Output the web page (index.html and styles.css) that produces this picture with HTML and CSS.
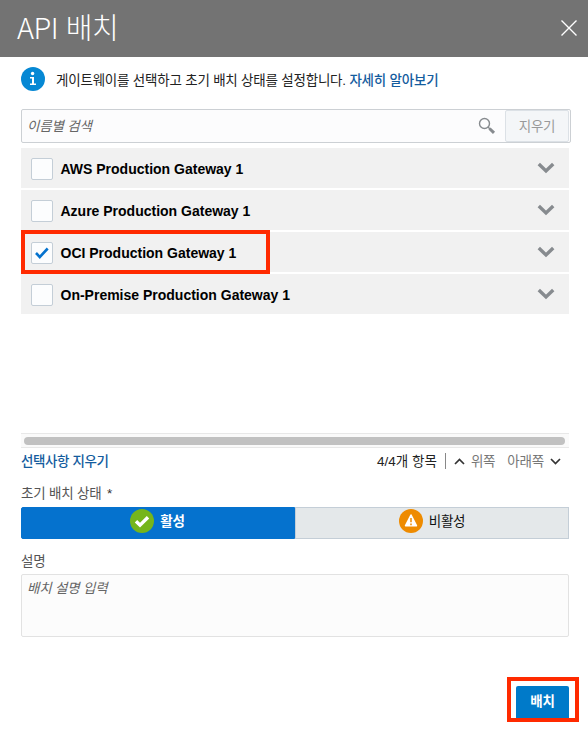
FILE: index.html
```html
<!DOCTYPE html>
<html lang="ko">
<head>
<meta charset="utf-8">
<title>API 배치</title>
<link rel="stylesheet" href="styles.css">
</head>
<body>
<header class="header">
  <h1 class="title">API <span class="title-ko">배치</span></h1>
  <svg class="close" width="18" height="18" viewBox="0 0 18 18"><path d="M1.5 1.5 16.5 16.5M16.5 1.5 1.5 16.5"/></svg>
</header>
<main class="content">
  <div class="info">
    <svg width="24" height="24" viewBox="0 0 24 24"><circle cx="12" cy="12" r="12" fill="#0688d4"/><circle cx="11.6" cy="6.5" r="1.7" fill="#fff"/><path d="M9 10h4v6.5h2V18H9v-1.5h2v-5H9z" fill="#fff"/></svg>
    <p class="info-text">게이트웨이를 선택하고 초기 배치 상태를 설정합니다. <a class="link">자세히 알아보기</a></p>
  </div>
  <div class="search">
    <span class="placeholder search-text">이름별 검색</span>
    <svg class="magnifier" width="18" height="18" viewBox="0 0 18 18"><circle cx="6.5" cy="6.5" r="5" fill="none" stroke="#878b8f" stroke-width="1.4"/><path d="m10 10 2 2" stroke="#878b8f" stroke-width="1.5"/><path d="m11.5 11.5 4.5 4.3" stroke="#878b8f" stroke-width="3"/></svg>
    <button class="clear">지우기</button>
  </div>
  <ul class="gateways">
    <li class="gateway"><span class="checkbox"></span><span class="name">AWS Production Gateway 1</span><svg class="chevron" width="18" height="12" viewBox="0 0 18 12"><path d="m1.8 2 7.2 7 7.2-7"/></svg></li>
    <li class="gateway"><span class="checkbox"></span><span class="name">Azure Production Gateway 1</span><svg class="chevron" width="18" height="12" viewBox="0 0 18 12"><path d="m1.8 2 7.2 7 7.2-7"/></svg></li>
    <li class="gateway selected"><span class="checkbox"><svg width="14" height="12" viewBox="0 0 14 12"><path d="m1 6 3.8 4L12.7 1.5" fill="none" stroke="#0572ce" stroke-width="2.6"/></svg></span><span class="name">OCI Production Gateway 1</span><svg class="chevron" width="18" height="12" viewBox="0 0 18 12"><path d="m1.8 2 7.2 7 7.2-7"/></svg></li>
    <li class="gateway"><span class="checkbox"></span><span class="name">On-Premise Production Gateway 1</span><svg class="chevron" width="18" height="12" viewBox="0 0 18 12"><path d="m1.8 2 7.2 7 7.2-7"/></svg></li>
  </ul>
  <div class="scrollbar"><div class="thumb"></div></div>
  <div class="list-footer">
    <a class="link clear-selection">선택사항 지우기</a>
    <span class="count">4/4개 항목</span>
    <span class="divider"></span>
    <svg class="pager" width="11" height="7" viewBox="0 0 11 7"><path d="m1 6 4.5-4.5L10 6"/></svg>
    <span class="page up">위쪽</span>
    <span class="page down">아래쪽</span>
    <svg class="pager" width="11" height="7" viewBox="0 0 11 7"><path d="m1 1 4.5 4.5L10 1"/></svg>
  </div>
  <div class="label state-label">초기 배치 상태 <span class="required">*</span></div>
  <div class="toggle">
    <div class="option active"><svg width="24" height="24" viewBox="0 0 24 24"><circle cx="12" cy="12" r="12" fill="#75b51b"/><path d="m6 12.2 4 4 8-8" fill="none" stroke="#fff" stroke-width="3.4"/></svg><span>활성</span></div>
    <div class="option"><svg width="24" height="24" viewBox="0 0 24 24"><circle cx="12" cy="12" r="12" fill="#ee8b00"/><path d="M12 6 17.4 16.7H6.6z" fill="#fff" stroke="#fff" stroke-width="1.6" stroke-linejoin="round"/><path d="M12 9v4.2M12 14.5v1.7" stroke="#ee8b00" stroke-width="1.5"/></svg><span>비활성</span></div>
  </div>
  <div class="label description-label">설명</div>
  <div class="textarea"><span class="placeholder">배치 설명 입력</span></div>
  <div class="actions"><div class="highlight"><button class="deploy">배치</button></div></div>
</main>
</body>
</html>
```

FILE: styles.css
```css
*, *::after { box-sizing: border-box; }
body {
  margin: 0;
  background: #fff;
  color: #222;
  font: 13.5px/20px "Liberation Sans", "Noto Sans CJK KR", sans-serif;
  letter-spacing: -.2px;
}
button { font: inherit; letter-spacing: inherit; padding: 0; }
svg { flex: none; display: block; }
.header {
  height: 57px;
  background: #737373;
  color: #fff;
  display: flex;
  align-items: flex-start;
  justify-content: space-between;
  padding: 0 10px 0 17px;
}
.title {
  margin: 6px 0 0;
  font: 300 29px/40px "Noto Sans CJK KR", sans-serif;
  letter-spacing: -.5px;
  white-space: nowrap;
}
.title-ko { letter-spacing: -.4px; }
.close { margin-top: 19px; stroke: #fff; stroke-width: 1.4; }
.content { padding: 10px 19px 0 21px; }
.info { display: flex; align-items: center; height: 24px; gap: 11px; }
.info-text { margin: 4px 0 0; letter-spacing: -.21px; white-space: nowrap; }
.link { color: #145c9e; font-weight: 500; }
.search {
  margin: 18px -2px 0 0;
  width: 550px;
  height: 34px;
  border: 1px solid #ccd0d4;
  border-radius: 2px;
  background: #fcfcfd;
  display: flex;
  align-items: center;
}
.placeholder { font-style: italic; color: #666; padding-left: 5px; }
.search-text { flex: 1; padding-top: 2px; }
.magnifier { margin-right: 9px; }
.clear {
  width: 64px;
  height: 32px;
  margin-right: 1px;
  padding-top: 1px;
  border: 1px solid #dce1e6;
  border-radius: 2px;
  background: #f4f6f8;
  color: #999;
}
.gateways {
  list-style: none;
  margin: 5px 0 0;
  padding: 0;
  height: 285px;
  display: flex;
  flex-direction: column;
  gap: 2px;
}
.gateway {
  position: relative;
  height: 40px;
  background: #f1f1f1;
  display: flex;
  align-items: center;
  padding: 2px 14px 0 10px;
}
.selected { z-index: 1; }
.selected::after {
  content: "";
  position: absolute;
  left: 0;
  top: -2px;
  width: 249px;
  height: 44px;
  border: 4px solid #ff2a00;
}
.checkbox {
  width: 22px;
  height: 22px;
  border: 1px solid #c4ced7;
  border-radius: 2px;
  background: #fcfdfe;
  display: grid;
  place-items: center;
}
.name { flex: 1; margin-left: 7.5px; color: #000; font-weight: bold; font-size: 14px; letter-spacing: 0; white-space: nowrap; }
.chevron { margin-top: -3px; fill: none; stroke: #878b8f; stroke-width: 3.4; }
.scrollbar {
  height: 15px;
  border: 1px solid #e8e8e8;
  border-width: 1px 0;
  background: #fafafa;
  padding: 3px 4px 0 3px;
}
.thumb { height: 8px; border-radius: 4px; background: #c1c1c1; }
.list-footer { display: flex; align-items: center; height: 26px; padding-right: 8px; white-space: nowrap; }
.clear-selection, .count, .page { padding-top: 2px; }
.clear-selection { margin-right: auto; letter-spacing: -.4px; }
.count { letter-spacing: 0; }
.divider { width: 1px; height: 16px; background: #888; margin: 0 8px; }
.pager { fill: none; stroke: #333; stroke-width: 1.7; }
.page { color: #777; }
.up { margin: 0 12px 0 6px; }
.down { margin-right: 6px; }
.label { color: #555; }
.state-label { margin-top: 10px; height: 23px; }
.required { margin-left: 2px; color: #333; }
.toggle { display: flex; height: 32px; }
.option {
  flex: none;
  width: 50%;
  display: flex;
  justify-content: center;
  gap: 6px;
  padding-top: 1px;
  border: 1px solid #c4ced7;
  background: #e4e8ea;
  color: #111;
  line-height: 26px;
}
.option.active { padding-right: 1px; background: #0572ce; border-color: #0572ce; color: #fff; font-weight: bold; border-radius: 2px 0 0 2px; }
.description-label { margin-top: 13px; height: 22px; }
.textarea { height: 63px; border: 1px solid #e2e2e2; border-radius: 2px; background: #fcfcfc; padding-top: 4px; }
.actions { display: flex; justify-content: flex-end; margin: 40px -10px 0 0; }
.highlight { width: 72px; height: 45px; border: 4px solid #ff2a00; padding: 5px 0 0 5px; }
.deploy { display: block; width: 53px; height: 32px; border: 0; border-radius: 2px 2px 0 0; background: #007ac9; color: #fff; font-weight: bold; }
```
